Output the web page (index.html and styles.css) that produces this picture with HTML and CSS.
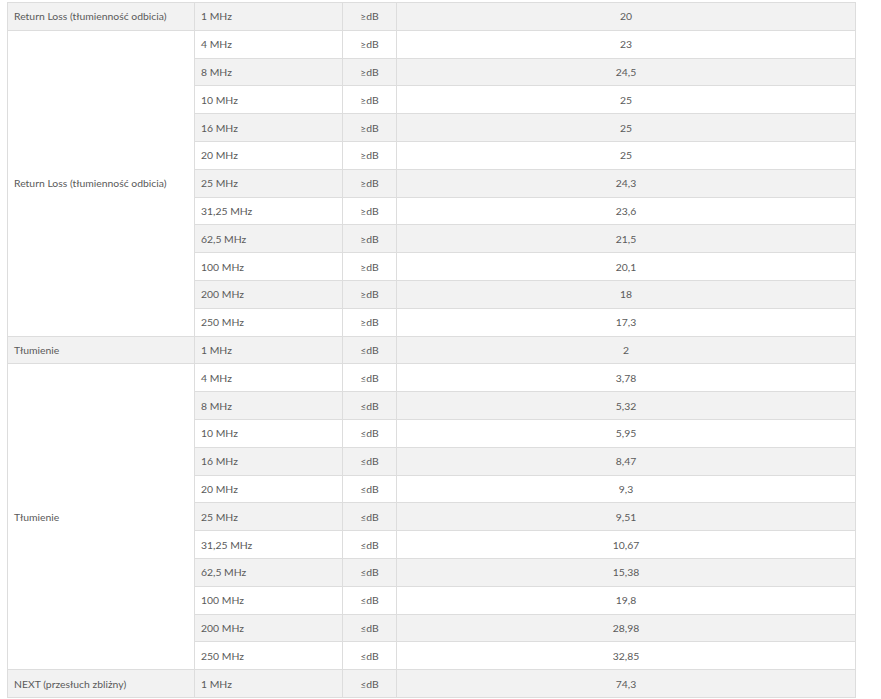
FILE: index.html
```html
<!DOCTYPE html>
<html lang="pl">
<head>
<meta charset="utf-8">
<title>Parametry</title>
<link rel="stylesheet" href="styles.css">
</head>
<body>
<div class="wrap">
<table class="spec">
<colgroup>
<col class="c1"><col class="c2"><col class="c3"><col class="c4">
</colgroup>
<tbody>
<tr><td>Return Loss (tłumienność odbicia)</td><td>1 MHz</td><td class="u">≥dB</td><td class="v">20</td></tr>
<tr><td rowspan="11" class="span">Return Loss (tłumienność odbicia)</td><td>4 MHz</td><td class="u">≥dB</td><td class="v">23</td></tr>
<tr><td>8 MHz</td><td class="u">≥dB</td><td class="v">24,5</td></tr>
<tr><td>10 MHz</td><td class="u">≥dB</td><td class="v">25</td></tr>
<tr><td>16 MHz</td><td class="u">≥dB</td><td class="v">25</td></tr>
<tr><td>20 MHz</td><td class="u">≥dB</td><td class="v">25</td></tr>
<tr><td>25 MHz</td><td class="u">≥dB</td><td class="v">24,3</td></tr>
<tr><td>31,25 MHz</td><td class="u">≥dB</td><td class="v">23,6</td></tr>
<tr><td>62,5 MHz</td><td class="u">≥dB</td><td class="v">21,5</td></tr>
<tr><td>100 MHz</td><td class="u">≥dB</td><td class="v">20,1</td></tr>
<tr><td>200 MHz</td><td class="u">≥dB</td><td class="v">18</td></tr>
<tr><td>250 MHz</td><td class="u">≥dB</td><td class="v">17,3</td></tr>
<tr><td>Tłumienie</td><td>1 MHz</td><td class="u">≤dB</td><td class="v">2</td></tr>
<tr><td rowspan="11" class="span">Tłumienie</td><td>4 MHz</td><td class="u">≤dB</td><td class="v">3,78</td></tr>
<tr><td>8 MHz</td><td class="u">≤dB</td><td class="v">5,32</td></tr>
<tr><td>10 MHz</td><td class="u">≤dB</td><td class="v">5,95</td></tr>
<tr><td>16 MHz</td><td class="u">≤dB</td><td class="v">8,47</td></tr>
<tr><td>20 MHz</td><td class="u">≤dB</td><td class="v">9,3</td></tr>
<tr><td>25 MHz</td><td class="u">≤dB</td><td class="v">9,51</td></tr>
<tr><td>31,25 MHz</td><td class="u">≤dB</td><td class="v">10,67</td></tr>
<tr><td>62,5 MHz</td><td class="u">≤dB</td><td class="v">15,38</td></tr>
<tr><td>100 MHz</td><td class="u">≤dB</td><td class="v">19,8</td></tr>
<tr><td>200 MHz</td><td class="u">≤dB</td><td class="v">28,98</td></tr>
<tr><td>250 MHz</td><td class="u">≤dB</td><td class="v">32,85</td></tr>
<tr><td>NEXT (przesłuch zbliżny)</td><td>1 MHz</td><td class="u">≤dB</td><td class="v">74,3</td></tr>
</tbody>
</table>
</div>
</body>
</html>
```

FILE: styles.css
```css
html, body {
  margin: 0;
  padding: 0;
  background: #ffffff;
}

.wrap {
  padding: 2px 0 0 7px;
}

.spec {
  border-collapse: collapse;
  table-layout: fixed;
  width: 848px;
  font-family: Lato, "Liberation Sans", sans-serif;
  font-size: 10.4px;
  color: #5a5a5a;
}

.c1 { width: 187px; }
.c2 { width: 148px; }
.c3 { width: 54px; }
.c4 { width: 459px; }

.spec tr {
  height: 27.8px;
}

.spec tr:nth-child(odd) td {
  background: #f2f2f2;
}

.spec td {
  border: 1px solid #dddddd;
  padding: 0 6px;
  text-align: left;
  vertical-align: middle;
  white-space: nowrap;
  overflow: hidden;
}

.spec tr td.span {
  background: #ffffff;
}

.spec td.u,
.spec td.v {
  text-align: center;
}
```
